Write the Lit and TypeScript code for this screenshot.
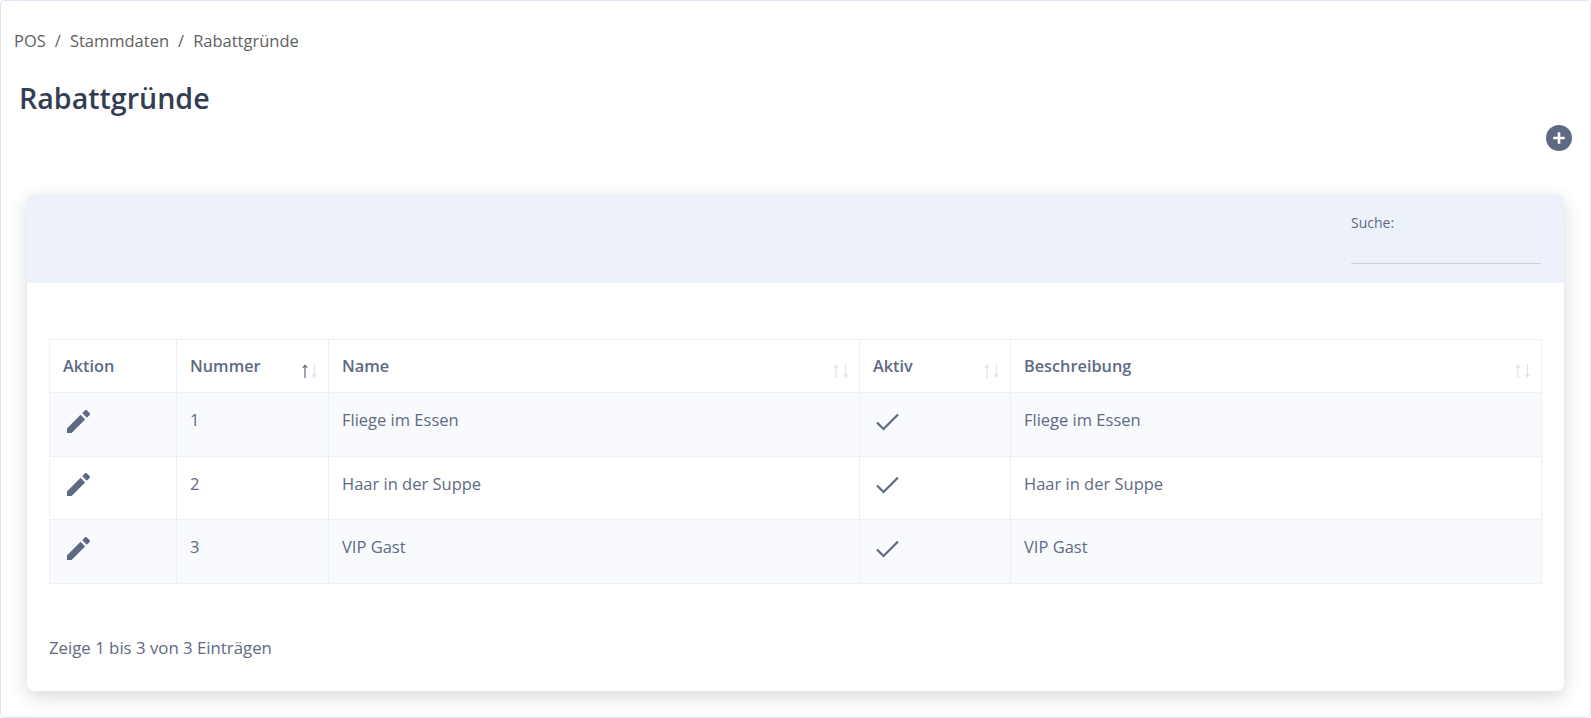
import { LitElement, html, css, svg } from "lit";
import { customElement } from "lit/decorators.js";

const rows = [
  { n: "1", name: "Fliege im Essen" },
  { n: "2", name: "Haar in der Suppe" },
  { n: "3", name: "VIP Gast" },
];

const pencil = svg`<path d="M1 20.2V25h4.8L19.9 10.9 15.1 6.1 1 20.2zM24.6 6.2c.5-.5.5-1.3 0-1.8l-3-3c-.5-.5-1.3-.5-1.8 0l-2.9 2.9 4.8 4.8 2.9-2.9z"/>`;

function sort(active = false) {
  return html`<svg class="sort" width="17" height="14" viewBox="0 0 17 14">
    <path class="${active ? "on" : ""}" d="M3 14V1.5M.8 4 3 1.2 5.2 4" />
    <path d="M12.5 0v12.5M10.3 10 12.5 12.8 14.7 10" />
  </svg>`;
}

@customElement("app-root")
export class AppRoot extends LitElement {
  static styles = css`
    :host {
      display: block;
      font-family: "Open Sans", "Noto Sans", sans-serif;
      color: #5e6a83;
    }
    .frame {
      box-sizing: border-box;
      height: 718px;
      border: 1px solid #dfe4f2;
      border-radius: 5px;
      background: #fff;
      padding: 29px 26px 0 13px;
      display: flex;
      flex-direction: column;
    }
    .crumbs {
      display: flex;
      gap: 9px;
      font-size: 16.5px;
      line-height: 22px;
      color: #5f5f5f;
    }
    h1 {
      margin: 24px 0 0 5px;
      font-size: 28.6px;
      line-height: 44px;
      font-weight: 600;
      color: #333e54;
    }
    .actions {
      display: flex;
      justify-content: flex-end;
      margin: 5px -8px 0 0;
    }
    .add {
      width: 26px;
      height: 26px;
      border-radius: 50%;
      background: #5e6a83;
      display: flex;
      align-items: center;
      justify-content: center;
    }
    .card {
      margin: 43px 0 0 13px;
      height: 497px;
      border-radius: 8px;
      background: #fff;
      box-shadow: 0 6px 18px rgba(40, 50, 70, 0.18);
      overflow: hidden;
    }
    .head {
      height: 89px;
      box-sizing: border-box;
      background: #edf2fa;
      padding: 19px 23px 0 0;
      display: flex;
      justify-content: flex-end;
    }
    .search {
      width: 190px;
      font-size: 14px;
      line-height: 20px;
      color: #5e6a83;
    }
    .line {
      margin-top: 30px;
      border-bottom: 1px solid #cfd2d6;
    }
    .body {
      padding: 56px 22px 0;
    }
    table {
      width: 100%;
      table-layout: fixed;
      border-collapse: collapse;
      font-size: 16.5px;
    }
    th,
    td {
      border: 1px solid #edf0f7;
      padding: 0 13px;
      text-align: left;
      position: relative;
    }
    th {
      height: 53px;
      font-weight: 600;
      font-size: 16.3px;
      padding-bottom: 0;
      box-sizing: border-box;
    }
    td {
      height: 63.6px;
      padding-bottom: 9px;
      box-sizing: border-box;
    }
    tbody tr:nth-child(odd) {
      background: #f8fafe;
    }
    svg {
      display: block;
      fill: #5e6a83;
    }
    .sort {
      position: absolute;
      right: 9px;
      bottom: 14px;
      fill: none;
      stroke: #dfe2ea;
      stroke-width: 1.2;
    }
    .sort .on {
      stroke: #5e6a83;
    }
    .pencil {
      margin: 3px 0 0 3px;
    }
    .check {
      margin: 2px 0 0 1px;
    }
    .info {
      margin-top: 52px;
      font-size: 16.8px;
      line-height: 24px;
    }
  `;

  render() {
    return html`
      <div class="frame">
        <nav class="crumbs">
          <span>POS</span><span>/</span><span>Stammdaten</span><span>/</span><span>Rabattgründe</span>
        </nav>
        <h1>Rabattgründe</h1>
        <div class="actions">
          <div class="add">
            <svg width="14" height="14" viewBox="0 0 14 14">
              <path d="M5.7 1.3h2.6v4.4h4.4v2.6H8.3v4.4H5.7V8.3H1.3V5.7h4.4z" fill="#fff" />
            </svg>
          </div>
        </div>
        <section class="card">
          <div class="head">
            <div class="search">
              <div>Suche:</div>
              <div class="line"></div>
            </div>
          </div>
          <div class="body">
            <table>
              <colgroup>
                <col style="width:127px" />
                <col style="width:152px" />
                <col style="width:531px" />
                <col style="width:151px" />
                <col />
              </colgroup>
              <thead>
                <tr>
                  <th>Aktion</th>
                  <th>Nummer${sort(true)}</th>
                  <th>Name${sort()}</th>
                  <th>Aktiv${sort()}</th>
                  <th>Beschreibung${sort()}</th>
                </tr>
              </thead>
              <tbody>
                ${rows.map(
                  (r) => html`<tr>
                    <td>
                      <svg class="pencil" width="25" height="25" viewBox="0 0 26 26">${pencil}</svg>
                    </td>
                    <td>${r.n}</td>
                    <td>${r.name}</td>
                    <td>
                      <svg class="check" width="26" height="26" viewBox="0 0 26 26">
                        <path d="M3 14.5l6.5 6.5L24 6.5" fill="none" stroke="#5e6a83" stroke-width="2.2" />
                      </svg>
                    </td>
                    <td>${r.name}</td>
                  </tr>`
                )}
              </tbody>
            </table>
            <div class="info">Zeige 1 bis 3 von 3 Einträgen</div>
          </div>
        </section>
      </div>
    `;
  }
}
